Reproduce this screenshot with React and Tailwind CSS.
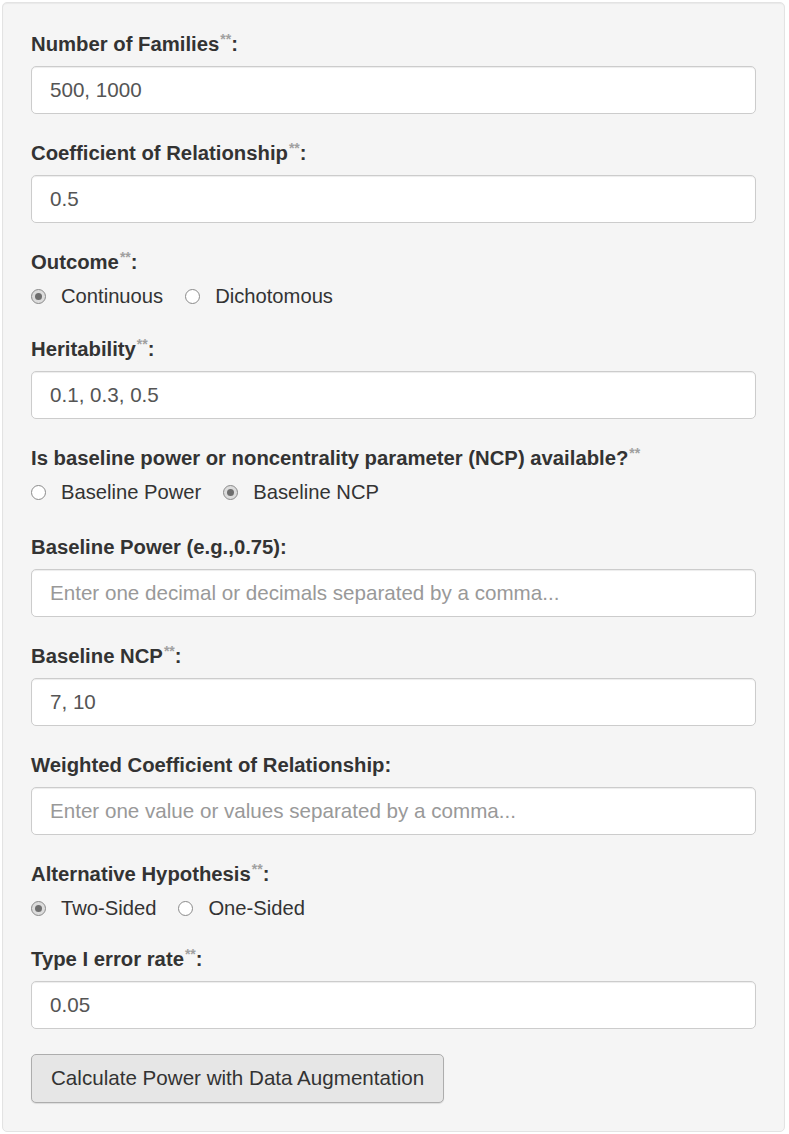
import React, { useState } from 'react';

const font = { fontFamily: '"Liberation Sans", Arial, Helvetica, sans-serif' };

function Stars() {
  return <sup className="text-[14px] font-bold text-[#a0a0a0] ml-[1px]">**</sup>;
}

function Label({ children, required }) {
  return (
    <label className="block text-[20.3px] leading-[28px] font-bold text-[#333]">
      {children}
      {required && <Stars />}
      :
    </label>
  );
}

function TextField({ label, required, value, placeholder }) {
  return (
    <div className="mb-[25px]">
      <Label required={required}>{label}</Label>
      <input
        type="text"
        defaultValue={value}
        placeholder={placeholder}
        className="mt-[8px] block w-full h-[48px] px-[18px] text-[20.6px] text-[#555] placeholder:text-[#999] bg-white border border-[#ccc] rounded-[5px] shadow-[inset_0_1px_1px_rgba(0,0,0,0.075)] outline-none"
        style={font}
      />
    </div>
  );
}

function Radio({ checked, label, onClick }) {
  return (
    <div className="flex items-center cursor-pointer" onClick={onClick}>
      {checked ? (
        <span className="w-[15px] h-[15px] rounded-full border border-[#8a8a8a] bg-[#dcdcdc] flex items-center justify-center">
          <span className="w-[7px] h-[7px] rounded-full bg-[#6e6e6e]" />
        </span>
      ) : (
        <span className="w-[15px] h-[15px] rounded-full border border-[#8a8a8a] bg-white" />
      )}
      <span className="ml-[15px] text-[20.2px] leading-[28px] text-[#333]">{label}</span>
    </div>
  );
}

function RadioGroup({ label, required, options, initial, colon = true, last = 'mb-[25px]' }) {
  const [selected, setSelected] = useState(initial);
  return (
    <div className={last}>
      {colon ? (
        <Label required={required}>{label}</Label>
      ) : (
        <label className="block text-[20.3px] leading-[28px] font-bold text-[#333]">
          {label}
          <Stars />
        </label>
      )}
      <div className="mt-[6px] flex gap-[22px]">
        {options.map((o) => (
          <Radio key={o} label={o} checked={selected === o} onClick={() => setSelected(o)} />
        ))}
      </div>
    </div>
  );
}

export default function App() {
  return (
    <div className="bg-white min-h-screen pt-[2px] pl-[2px]" style={font}>
      <div className="w-[783px] bg-[#f5f5f5] border border-[#e3e3e3] rounded-[5px] shadow-[inset_0_1px_1px_rgba(0,0,0,0.05)] pt-[27px] pb-[28px] px-[28px]">
        <TextField label="Number of Families" required value="500, 1000" />
        <TextField label="Coefficient of Relationship" required value="0.5" />
        <RadioGroup label="Outcome" required options={['Continuous', 'Dichotomous']} initial="Continuous" />
        <TextField label="Heritability" required value="0.1, 0.3, 0.5" />
        <RadioGroup
          label="Is baseline power or noncentrality parameter (NCP) available?"
          colon={false}
          options={['Baseline Power', 'Baseline NCP']}
          initial="Baseline NCP"
          last="mb-[27px]"
        />
        <TextField
          label="Baseline Power (e.g.,0.75)"
          placeholder="Enter one decimal or decimals separated by a comma..."
        />
        <TextField label="Baseline NCP" required value="7, 10" />
        <TextField
          label="Weighted Coefficient of Relationship"
          placeholder="Enter one value or values separated by a comma..."
        />
        <RadioGroup label="Alternative Hypothesis" required options={['Two-Sided', 'One-Sided']} initial="Two-Sided" last="mb-[23px]" />
        <TextField label="Type I error rate" required value="0.05" />
        <button
          className="h-[49px] px-[19px] text-[20.6px] text-[#333] bg-[#e6e6e6] border border-[#adadad] rounded-[5px] shadow-[0_1px_1px_rgba(0,0,0,0.1)]"
          style={font}
        >
          Calculate Power with Data Augmentation
        </button>
      </div>
    </div>
  );
}
